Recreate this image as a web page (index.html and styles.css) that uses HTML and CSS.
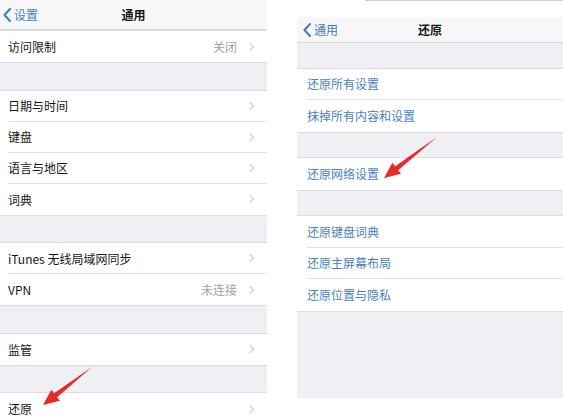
FILE: index.html
```html
<!DOCTYPE html>
<html lang="zh-CN">
<head>
    <meta charset="UTF-8">
    <title>通用 / 还原</title>
    <link rel="stylesheet" href="styles.css">
</head>
<body>
    <div class="screens">
        <section class="phone left">
            <header class="nav">
                <span class="back"><svg class="back-chev" width="8" height="14" viewBox="0 0 8 14"><path d="M7 1 L1.5 7 L7 13" fill="none" stroke="#3e7bc4" stroke-width="2" stroke-linecap="round" stroke-linejoin="round"/></svg>设置</span>
                <span class="title">通用</span>
            </header>
            <div class="group">
                <div class="row"><span class="label">访问限制</span><span class="value">关闭</span><span class="chev"></span></div>
            </div>
            <div class="gap"></div>
            <div class="group">
                <div class="row"><span class="label">日期与时间</span><span class="chev"></span></div>
                <div class="row"><span class="label">键盘</span><span class="chev"></span></div>
                <div class="row"><span class="label">语言与地区</span><span class="chev"></span></div>
                <div class="row"><span class="label">词典</span><span class="chev"></span></div>
            </div>
            <div class="gap"></div>
            <div class="group">
                <div class="row"><span class="label">iTunes 无线局域网同步</span><span class="chev"></span></div>
                <div class="row"><span class="label">VPN</span><span class="value">未连接</span><span class="chev"></span></div>
            </div>
            <div class="gap"></div>
            <div class="group">
                <div class="row"><span class="label">监管</span><span class="chev"></span></div>
            </div>
            <div class="gap"></div>
            <div class="group">
                <div class="row"><span class="label">还原</span><span class="chev"></span></div>
            </div>
        </section>

        <section class="phone right">
            <div class="topline"></div>
            <header class="nav">
                <span class="back"><svg class="back-chev" width="8" height="14" viewBox="0 0 8 14"><path d="M7 1 L1.5 7 L7 13" fill="none" stroke="#3e7bc4" stroke-width="2" stroke-linecap="round" stroke-linejoin="round"/></svg>通用</span>
                <span class="title">还原</span>
            </header>
            <div class="gap"></div>
            <div class="group">
                <div class="row action"><span class="label">还原所有设置</span></div>
                <div class="row action"><span class="label">抹掉所有内容和设置</span></div>
            </div>
            <div class="gap"></div>
            <div class="group">
                <div class="row action"><span class="label">还原网络设置</span></div>
            </div>
            <div class="gap"></div>
            <div class="group">
                <div class="row action"><span class="label">还原键盘词典</span></div>
                <div class="row action"><span class="label">还原主屏幕布局</span></div>
                <div class="row action"><span class="label">还原位置与隐私</span></div>
            </div>
            <div class="gap tall"></div>
        </section>
    </div>

    <!-- red pointer arrows drawn over the screenshots -->
    <svg class="arrows" width="563" height="419" viewBox="0 0 563 419">
        <polygon points="437,137 398.2,170.2 401,173.7 384,178 392.4,162.7 395.2,166.2" fill="#e52a2a"/>
        <polygon points="92,367 57.1,397.2 59.9,400.7 43,405 51.3,389.7 54.1,393.2" fill="#e52a2a"/>
    </svg>
</body>
</html>
```

FILE: styles.css
```css
html, body {
    margin: 0;
    padding: 0;
    background-color: #ffffff;
}
body {
    width: 563px;
    height: 419px;
    overflow: hidden;
    position: relative;
    font-family: "Noto Sans CJK SC", "Noto Sans", sans-serif;
    font-size: 12px;
    color: #151515;
}
.screens {
    display: flex;
    gap: 30px;
}
.phone {
    display: flex;
    flex-direction: column;
}
.phone.left {
    width: 267px;
}
.phone.right {
    width: 266px;
}
.topline {
    height: 1px;
    margin-left: 68px;
    margin-bottom: 16px;
    background-color: #cfcfd2;
}
.nav {
    position: relative;
    display: flex;
    align-items: center;
    justify-content: center;
    height: 30px;
    box-sizing: border-box;
    background-color: #f7f7f7;
    border-bottom: 1px solid #d6d6d9;
}
.right .nav {
    height: 26px;
}
.back {
    position: absolute;
    left: 3px;
    top: 0;
    bottom: 0;
    display: flex;
    align-items: center;
    gap: 3px;
    color: #3e7bc4;
    font-size: 12px;
}
.right .back {
    left: 6px;
}
.title {
    font-weight: 700;
    font-size: 12px;
}
.gap {
    height: 26.5px;
    background-color: #efeff4;
}
.right .gap {
    height: 24.5px;
}
.right .gap.tall {
    height: 86px;
}
.group {
    background-color: #ffffff;
    padding-left: 8px;
    border-top: 1px solid #dcdce0;
    border-bottom: 1px solid #dcdce0;
}
.right .group {
    padding-left: 10px;
}
.row {
    display: flex;
    align-items: center;
    height: 31px;
    box-sizing: border-box;
    padding-right: 14px;
    border-bottom: 1px solid #e2e2e6;
}
.right .row {
    height: 31.5px;
}
.row:last-child {
    border-bottom: none;
}
.label {
    flex: 1;
}
.action .label {
    color: #4a7fbf;
}
.value {
    color: #a0a0a4;
    margin-right: 10px;
}
.chev {
    width: 5px;
    height: 5px;
    border-top: 1.2px solid #c9c9ce;
    border-right: 1.2px solid #c9c9ce;
    transform: rotate(45deg);
}
.arrows {
    position: absolute;
    left: 0;
    top: 0;
    pointer-events: none;
}
```
